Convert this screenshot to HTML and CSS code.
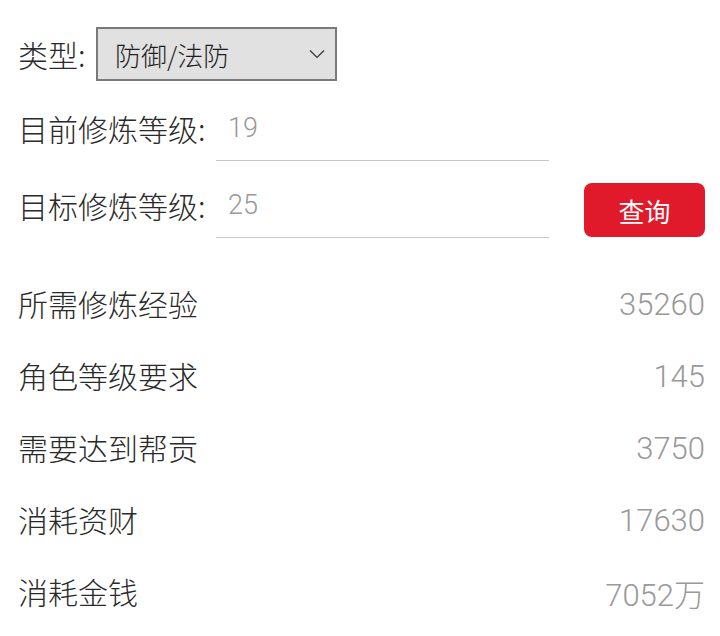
FILE: index.html
```html
<!DOCTYPE html>
<html lang="zh-CN">
<head>
  <meta charset="UTF-8">
  <meta name="viewport" content="width=device-width, initial-scale=1.0">
  <title>修炼查询</title>
  <link rel="stylesheet" href="styles.css">
</head>
<body>

  <div class="page">
    <!-- 查询条件 -->
    <div class="form-row type-row">
      <span class="label">类型:</span>
      <div class="select-box">
        <span>防御/法防</span>
        <svg class="chevron" width="16" height="10" viewBox="0 0 16 10">
          <polyline points="1,1.5 8,8.5 15,1.5" fill="none" stroke="#333" stroke-width="1.2"/>
        </svg>
      </div>
    </div>

    <div class="form-row level-row">
      <span class="label level-label">目前修炼等级:</span>
      <input class="level-input" type="text" value="19">
    </div>

    <div class="form-row level-row">
      <span class="label level-label">目标修炼等级:</span>
      <input class="level-input" type="text" value="25">
      <button class="query-btn">查询</button>
    </div>

    <!-- 查询结果 -->
    <div class="results">
      <div class="result-row"><span>所需修炼经验</span><span class="value">35260</span></div>
      <div class="result-row"><span>角色等级要求</span><span class="value">145</span></div>
      <div class="result-row"><span>需要达到帮贡</span><span class="value">3750</span></div>
      <div class="result-row"><span>消耗资财</span><span class="value">17630</span></div>
      <div class="result-row"><span>消耗金钱</span><span class="value">7052万</span></div>
    </div>
  </div>

</body>
</html>
```

FILE: styles.css
```css
body, html {
  margin: 0;
  padding: 0;
  background: #fff;
  font-family: 'Noto Sans CJK SC', 'Noto Sans', sans-serif;
  font-weight: 300;
  color: #2a2a2a;
}

.page {
  padding: 27px 15px 0 18px;
}

.form-row {
  display: flex;
  align-items: center;
}

.label {
  font-size: 30px;
  line-height: 1;
}

/* 类型下拉框 */
.type-row .label {
  width: 78px;
}

.select-box {
  height: 50px;
  width: 210px;
  background-color: #e1e1e1;
  border: 2px solid #7a7a7a;
  display: flex;
  align-items: center;
  padding-left: 17px;
  padding-right: 10px;
  font-size: 26px;
  color: #1e1e1e;
}

.chevron {
  margin-left: auto;
}

/* 等级输入 */
.level-row {
  margin-top: 23px;
  height: 54px;
}

.level-label {
  width: 198px;
  padding-bottom: 6px;
}

.level-input {
  width: 321px;
  height: 53px;
  border: none;
  border-bottom: 1px solid #c8c8c8;
  padding: 0 0 6px 12px;
  font-family: Roboto, 'Noto Sans CJK SC', sans-serif;
  font-weight: 300;
  font-size: 27px;
  color: #999;
  outline: none;
  background: transparent;
}

.query-btn {
  margin-left: auto;
  width: 121px;
  height: 54px;
  background-color: #e01a2b;
  color: #fff;
  border: none;
  border-radius: 8px;
  font-family: inherit;
  font-weight: 400;
  font-size: 26px;
  margin-top: 4px;
}

/* 结果列表 */
.results {
  margin-top: 32px;
}

.result-row {
  height: 72px;
  display: flex;
  align-items: center;
  justify-content: space-between;
  font-size: 30px;
}

.result-row .value {
  font-family: Roboto, 'Noto Sans CJK SC', sans-serif;
  font-weight: 300;
  color: #999;
  font-size: 31px;
  padding-top: 3px;
}
```
